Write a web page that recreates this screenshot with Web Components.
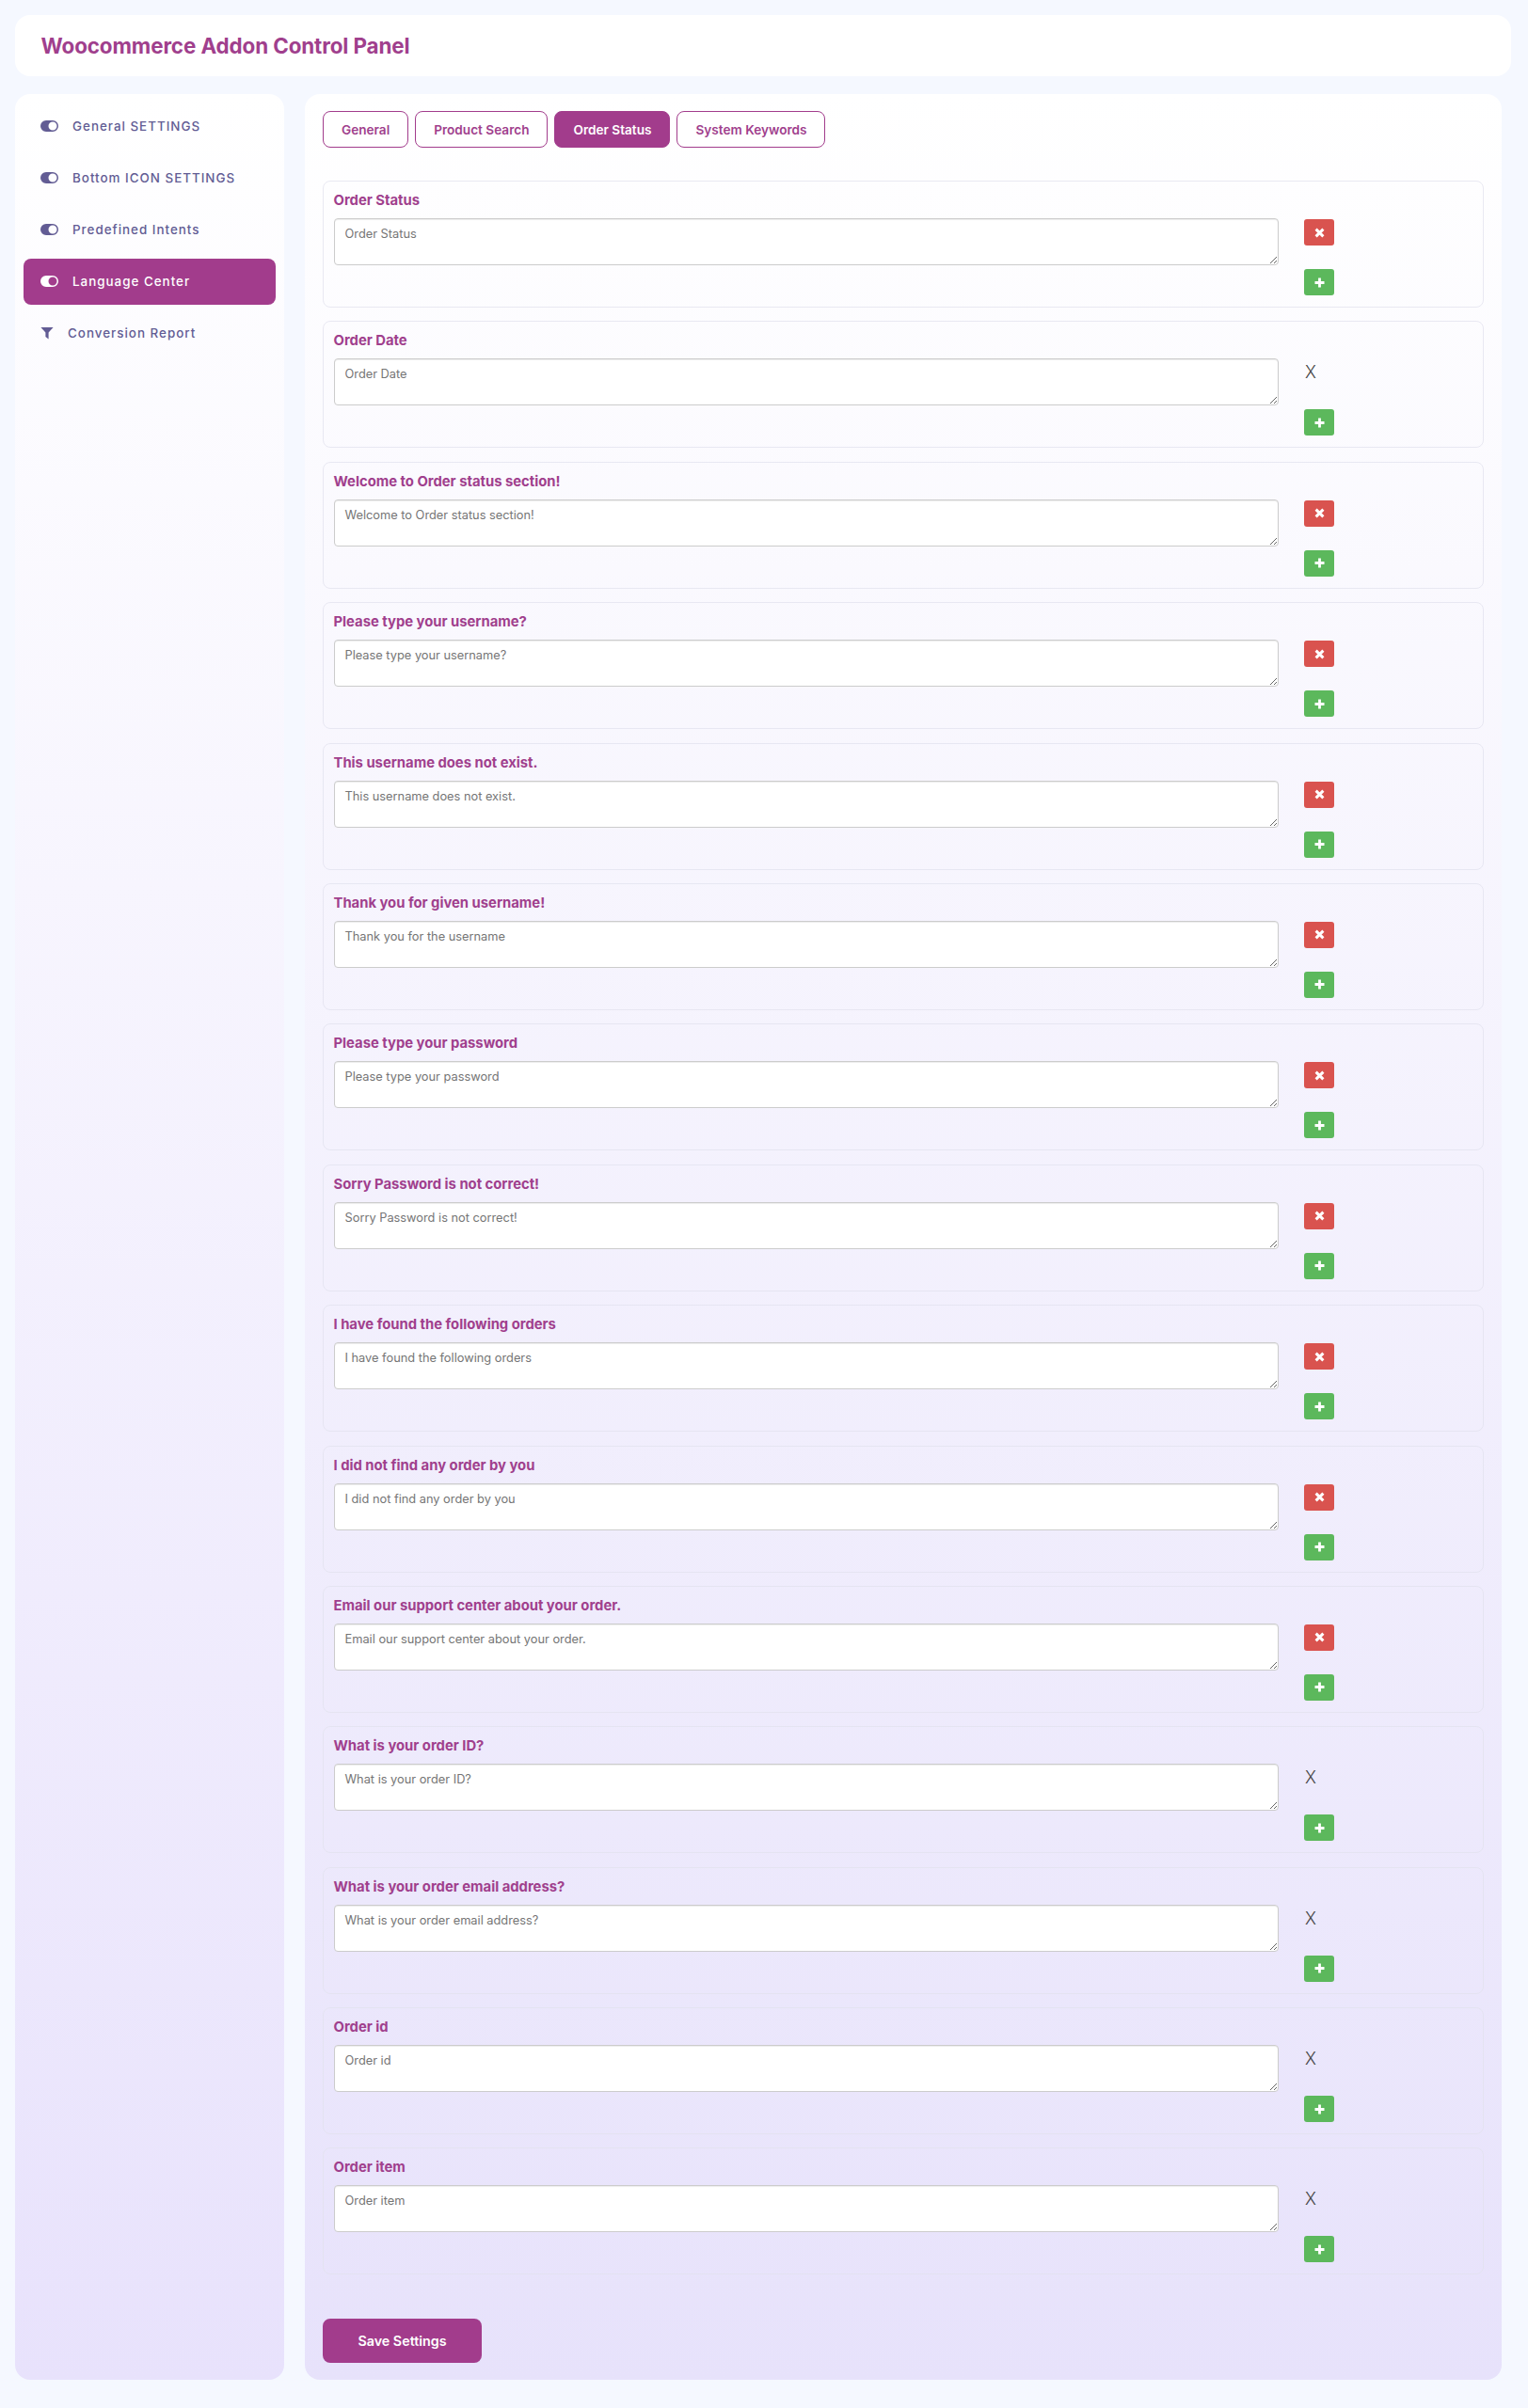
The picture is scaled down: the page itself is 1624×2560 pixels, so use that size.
<!DOCTYPE html>
<html lang="en">
<head>
<meta charset="utf-8">
<title>Woocommerce Addon Control Panel</title>
<style>
  html,body{margin:0;padding:0;background:#f5f8ff}
  body{font-family:Inter,"Liberation Sans",sans-serif}
</style>
</head>
<body>
<control-panel>
  <panel-header slot="header">Woocommerce Addon Control Panel</panel-header>
  <side-nav slot="side">
    <nav-item icon="toggle">General SETTINGS</nav-item>
    <nav-item icon="toggle">Bottom ICON SETTINGS</nav-item>
    <nav-item icon="toggle">Predefined Intents</nav-item>
    <nav-item icon="toggle" active>Language Center</nav-item>
    <nav-item icon="filter">Conversion Report</nav-item>
  </side-nav>
  <settings-form slot="main">
    <form-tab>General</form-tab>
    <form-tab>Product Search</form-tab>
    <form-tab active>Order Status</form-tab>
    <form-tab>System Keywords</form-tab>
    <phrase-row slot="rows" label="Order Status" removable>Order Status</phrase-row>
    <phrase-row slot="rows" label="Order Date">Order Date</phrase-row>
    <phrase-row slot="rows" label="Welcome to Order status section!" removable>Welcome to Order status section!</phrase-row>
    <phrase-row slot="rows" label="Please type your username?" removable>Please type your username?</phrase-row>
    <phrase-row slot="rows" label="This username does not exist." removable>This username does not exist.</phrase-row>
    <phrase-row slot="rows" label="Thank you for given username!" removable>Thank you for the username</phrase-row>
    <phrase-row slot="rows" label="Please type your password" removable>Please type your password</phrase-row>
    <phrase-row slot="rows" label="Sorry Password is not correct!" removable>Sorry Password is not correct!</phrase-row>
    <phrase-row slot="rows" label="I have found the following orders" removable>I have found the following orders</phrase-row>
    <phrase-row slot="rows" label="I did not find any order by you" removable>I did not find any order by you</phrase-row>
    <phrase-row slot="rows" label="Email our support center about your order." removable>Email our support center about your order.</phrase-row>
    <phrase-row slot="rows" label="What is your order ID?">What is your order ID?</phrase-row>
    <phrase-row slot="rows" label="What is your order email address?">What is your order email address?</phrase-row>
    <phrase-row slot="rows" label="Order id">Order id</phrase-row>
    <phrase-row slot="rows" label="Order item">Order item</phrase-row>
  </settings-form>
</control-panel>
<script>
class ControlPanel extends HTMLElement {
    constructor() {
        super();
        this.attachShadow({mode: 'open'}).innerHTML = `
      <style>
        :host{display:block;box-sizing:border-box;padding:16px 18px 29px 16px}
        .cols{display:flex;gap:22px;margin:19px 10px 0 0;align-items:stretch}
        ::slotted([slot=side]){width:286px;flex:none}
        ::slotted([slot=main]){flex:1;min-width:0}
      </style>
      <slot name="header"></slot>
      <div class="cols"><slot name="side"></slot><slot name="main"></slot></div>
    `;
    }
}

class PanelHeader extends HTMLElement {
    constructor() {
        super();
        this.attachShadow({mode: 'open'}).innerHTML = `
      <style>
        :host{display:flex;align-items:center;box-sizing:border-box;height:65px;padding:0 27.5px;background:#fff;border-radius:16px;color:#a03f8d;font-size:22.4px;font-weight:700;letter-spacing:-.1px}
      </style>
      <slot></slot>
    `;
    }
}

class SideNav extends HTMLElement {
    constructor() {
        super();
        this.attachShadow({mode: 'open'}).innerHTML = `
      <style>
        :host{display:flex;flex-direction:column;gap:6px;box-sizing:border-box;padding:10px 9px;background:linear-gradient(#fff,#e8e2fc);border-radius:16px}
      </style>
      <slot></slot>
    `;
    }
}

const ICONS = {
    toggle: `<svg width="19" height="12" viewBox="0 0 19 12"><path fill="currentColor" fill-rule="evenodd" d="M6 0h7a6 6 0 0 1 0 12H6A6 6 0 0 1 6 0zM13 1.5a4.5 4.5 0 1 0 0 9 4.5 4.5 0 0 0 0-9z"/></svg>`,
    filter: `<svg width="14" height="14" viewBox="0 0 14 14"><path fill="currentColor" d="M.4 1h13.2l-5 5.6V13.4L5.4 11V6.6z"/></svg>`
};

class NavItem extends HTMLElement {
    constructor() {
        super();
        const icon = this.getAttribute('icon');
        this.attachShadow({mode: 'open'}).innerHTML = `
      <style>
        :host{display:flex;align-items:center;height:49px;box-sizing:border-box;padding:0 0 2px 18px;border-radius:8px;color:#625c94;font-size:13.4px;font-weight:500;letter-spacing:1px}
        :host([active]){background:#a23c8c;color:#fff}
        svg{display:block;flex:none}
        .ic{margin-right:15px;display:flex}
      </style>
      <span class="ic">${ICONS[icon]}</span><slot></slot>
    `;
    }
}

class FormTab extends HTMLElement {
    constructor() {
        super();
        this.attachShadow({mode: 'open'}).innerHTML = `
      <style>
        :host{display:flex;align-items:center;box-sizing:border-box;height:39px;padding:0 19px;border:1px solid #a23c8c;border-radius:8px;background:#fff;color:#a03f8d;font-size:13.6px;font-weight:600}
        :host([active]){background:#a23c8c;color:#fff}
      </style>
      <slot></slot>
    `;
    }
}

class SettingsForm extends HTMLElement {
    constructor() {
        super();
        this.attachShadow({mode: 'open'}).innerHTML = `
      <style>
        :host{display:block;box-sizing:border-box;padding:18px 19px 18px 19px;background:linear-gradient(#fff,#e7e2fb);border-radius:16px}
        .tabs{display:flex;gap:7px;margin-bottom:35px}
        .rows{display:flex;flex-direction:column;gap:14.4px}
        button{display:block;box-sizing:border-box;width:169px;height:47px;margin-top:47px;border:0;border-radius:8px;background:#a23c8c;color:#fff;font:600 14.3px Inter,"Liberation Sans",sans-serif}
      </style>
      <div class="tabs"><slot></slot></div>
      <div class="rows"><slot name="rows"></slot></div>
      <button type="button">Save Settings</button>
    `;
    }
}

class PhraseRow extends HTMLElement {
    constructor() {
        super();
        const label = this.getAttribute('label');
        const top = this.hasAttribute('removable')
            ? `<span class="btn red"><svg width="11" height="11" viewBox="0 0 11 11"><path d="M1.6 1.6l7.8 7.8M9.4 1.6l-7.8 7.8" stroke="#fff" stroke-width="3"/></svg></span>`
            : `<span class="x">X</span>`;
        this.attachShadow({mode: 'open'}).innerHTML = `
      <style>
        :host{display:block;box-sizing:border-box;height:135px;padding:10px 11px 0;border:1px solid rgba(225,225,238,.75);border-radius:8px}
        .lbl{height:20px;line-height:20px;margin:0 0 9px -.5px;color:#a03f8d;font-size:14.8px;font-weight:700}
        .line{display:flex;align-items:flex-start}
        textarea{display:block;box-sizing:border-box;width:1004px;height:50px;flex:none;margin:0;padding:7px 10.5px;border:1px solid #ccc;border-radius:4px;background:#fff;color:#757575;font:12.8px/17px Inter,"Liberation Sans",sans-serif;outline:0;box-shadow:inset 0 1px 1px rgba(0,0,0,.075)}
        .acts{margin-left:27px;width:32px}
        .top{height:54px;display:flex;align-items:flex-start}
        .btn{display:flex;align-items:center;justify-content:center;width:32px;height:28px;border-radius:3px}
        .red{background:#d9534f;margin-top:1px}
        .green{background:#5cb85c}
        .x{font-size:18px;line-height:22px;color:#444;margin:4px 0 0 1px;font-weight:300}
        svg{display:block}
      </style>
      <div class="lbl">${label}</div>
      <div class="line">
        <textarea readonly></textarea>
        <div class="acts">
          <div class="top">${top}</div>
          <span class="btn green"><svg width="11" height="11" viewBox="0 0 11 11"><path d="M5.5 .5v10M.5 5.5h10" stroke="#fff" stroke-width="2.8"/></svg></span>
        </div>
      </div>
    `;
        this.shadowRoot.querySelector('textarea').textContent = this.textContent;
    }
}

customElements.define('control-panel', ControlPanel);
customElements.define('panel-header', PanelHeader);
customElements.define('side-nav', SideNav);
customElements.define('nav-item', NavItem);
customElements.define('form-tab', FormTab);
customElements.define('settings-form', SettingsForm);
customElements.define('phrase-row', PhraseRow);
</script>
</body>
</html>
